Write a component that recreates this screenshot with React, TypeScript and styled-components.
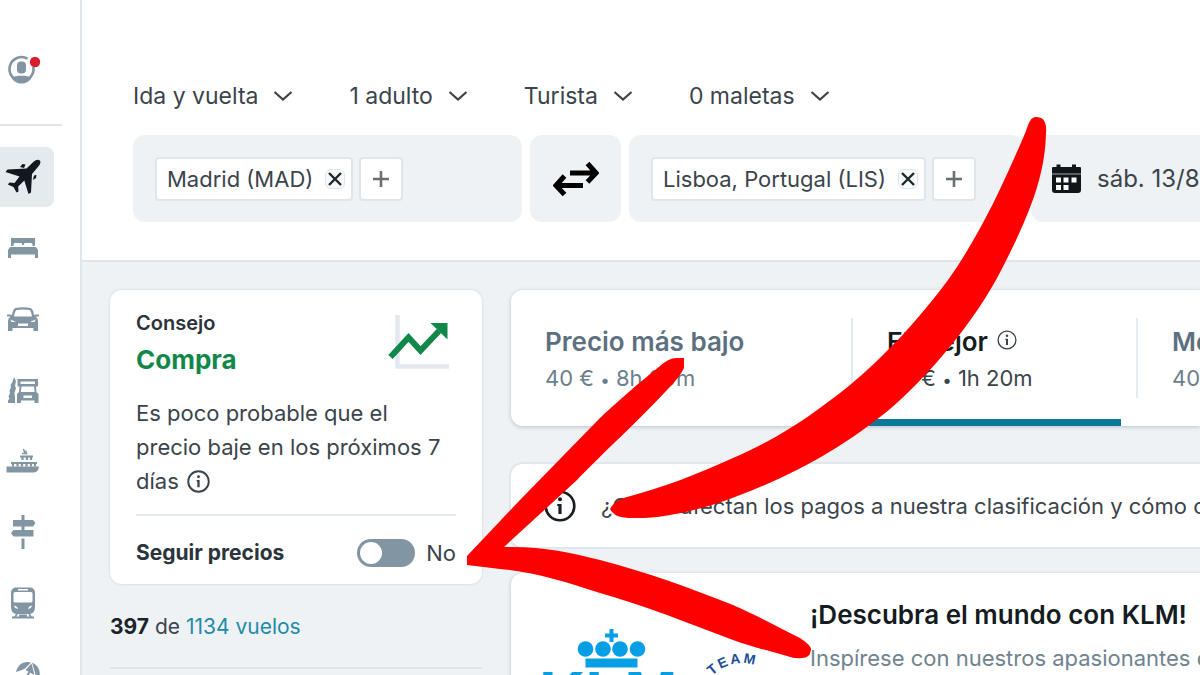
import React, { useState } from "react";
import styled, { createGlobalStyle } from "styled-components";

const GlobalStyle = createGlobalStyle`
  *, *::before, *::after { box-sizing: border-box; }
  html, body, #root { height: 100%; }
  body {
    margin: 0;
    overflow: hidden;
    background: #ffffff;
    color: #3b444b;
    font-family: Inter, "Liberation Sans", sans-serif;
    font-size: 22px;
    line-height: 34px;
  }
  button, select, input { font: inherit; color: inherit; }
  h2, h3, p, ul { margin: 0; padding: 0; }
  svg { display: block; flex: none; }
`;

const Page = styled.div`
  position: relative;
  display: flex;
  height: 100%;
  overflow: hidden;
`;

/* ---------- side navigation ---------- */

const Sidebar = styled.nav`
  flex: 0 0 82px;
  border-right: 2px solid #dfe6eb;
  background: #ffffff;
  overflow: hidden;
`;

const AccountArea = styled.div`
  width: 62px;
  padding: 51px 0 37px 6px;
  border-bottom: 2px solid #dfe5ea;
`;

const AccountButton = styled.button`
  display: block;
  padding: 0;
  border: 0;
  background: none;
  cursor: pointer;
`;

const NavList = styled.ul`
  display: flex;
  flex-direction: column;
  gap: 11px;
  padding-top: 21px;
  list-style: none;
`;

const NavLink = styled.a<{ $active?: boolean }>`
  display: flex;
  align-items: center;
  width: 54px;
  height: 60px;
  padding-left: 5px;
  border-radius: 0 8px 8px 0;
  color: ${(p) => (p.$active ? "#11181f" : "#8295a3")};
  background: ${(p) => (p.$active ? "#e5eaee" : "transparent")};
`;

/* ---------- search header ---------- */

const Main = styled.main`
  flex: 1;
  min-width: 0;
  display: flex;
  flex-direction: column;
`;

const SearchHeader = styled.header`
  flex: none;
  padding: 79px 0 38px 51px;
  border-bottom: 2px solid #dfe6eb;
  overflow: hidden;
`;

const FilterRow = styled.div`
  display: flex;
  gap: 56px;
  font-size: 23px;
`;

const FilterLabel = styled.label`
  display: flex;
  align-items: center;
  gap: 15px;
`;

const FilterSelect = styled.select`
  appearance: none;
  field-sizing: content;
  height: 34px;
  padding: 0;
  border: 0;
  background: none;
  cursor: pointer;
`;

const SearchRow = styled.div`
  display: flex;
  gap: 8px;
  margin-top: 22px;
`;

const Field = styled.div<{ $grow?: number }>`
  display: flex;
  flex: none;
  align-items: center;
  gap: 6px;
  min-width: ${(p) => (p.$grow ? `${p.$grow}px` : "auto")};
  height: 87px;
  padding: 0 22px;
  border-radius: 12px;
  background: #eef2f5;
`;

const SwapButton = styled.button`
  display: grid;
  flex: none;
  place-items: center;
  width: 91px;
  border: 0;
  border-radius: 12px;
  background: #eef2f5;
  cursor: pointer;
`;

const DateButton = styled.button`
  display: flex;
  flex: none;
  align-items: center;
  gap: 15px;
  min-width: 240px;
  padding: 0 20px;
  border: 0;
  border-radius: 12px;
  background: #eef2f5;
  font-size: 24px;
  white-space: nowrap;
  cursor: pointer;
`;

const Chip = styled.span`
  display: flex;
  align-items: center;
  gap: 12px;
  height: 44px;
  padding: 0 6px 0 10px;
  border: 2px solid #dfe6eb;
  border-radius: 4px;
  background: #ffffff;
  white-space: nowrap;
`;

const ChipRemove = styled.button`
  display: grid;
  place-items: center;
  width: 20px;
  height: 20px;
  padding: 0;
  border: 1px solid #dfe6eb;
  border-radius: 6px;
  background: #f8fafb;
  cursor: pointer;
`;

const AddButton = styled.button`
  display: grid;
  place-items: center;
  width: 44px;
  height: 44px;
  padding: 0;
  border: 2px solid #dfe6eb;
  border-radius: 4px;
  background: #ffffff;
  cursor: pointer;
`;

/* ---------- results area ---------- */

const Content = styled.div`
  display: flex;
  flex: 1;
  gap: 29px;
  min-height: 0;
  padding: 28px 0 0 28px;
  overflow: hidden;
  background: #eef2f5;
`;

const Aside = styled.aside`
  flex: 0 0 372px;
`;

const AdviceCard = styled.section`
  padding: 16px 26px 14px;
  border-radius: 12px;
  background: #ffffff;
  box-shadow: 0 0 3px rgba(60, 85, 105, 0.2);
`;

const AdviceTop = styled.div`
  display: flex;
  align-items: flex-start;
  justify-content: space-between;
  padding-right: 6px;

  svg { margin-top: 8px; }
`;

const AdviceLabel = styled.p`
  color: #2b343b;
  font-size: 20px;
  font-weight: 600;
`;

const AdviceTitle = styled.h2`
  color: #12874a;
  font-size: 26px;
  font-weight: 700;
  line-height: 40px;
`;

const AdviceText = styled.p`
  margin-top: 16px;

  svg {
    display: inline-block;
    margin-left: 2px;
    vertical-align: -4px;
  }
`;

const FollowRow = styled.div`
  display: flex;
  align-items: center;
  margin-top: 16px;
  padding-top: 20px;
  border-top: 2px solid #e5eaee;
`;

const FollowLabel = styled.label`
  flex: 1;
  color: #2b343b;
  font-size: 21px;
  font-weight: 700;
`;

const Toggle = styled.input`
  appearance: none;
  width: 58px;
  height: 28px;
  margin: 0 11px 0 0;
  padding: 3px;
  border-radius: 14px;
  background: #8295a3;
  cursor: pointer;

  &::before {
    content: "";
    display: block;
    width: 22px;
    height: 22px;
    border-radius: 50%;
    background: #ffffff;
  }

  &:checked::before {
    margin-left: auto;
  }
`;

const CountBar = styled.p`
  padding: 26px 0 23px;
  border-bottom: 2px solid #dfe5ea;
  font-size: 21px;

  strong { color: #1b2329; }
  a { color: #1f8ba8; text-decoration: none; }
`;

const Results = styled.div`
  flex: 1;
  min-width: 0;
`;

const Panel = styled.section`
  border-radius: 12px 0 0 12px;
  background: #ffffff;
  box-shadow: 0 1px 4px rgba(60, 85, 105, 0.3);
`;

const TabBar = styled(Panel)`
  display: flex;
  height: 136px;
  overflow: hidden;
`;

const Tab = styled.button<{ $active?: boolean; $width: number }>`
  position: relative;
  display: flex;
  flex: 0 0 ${(p) => p.$width}px;
  flex-direction: column;
  padding: 32px 34px 0;
  border: 0;
  background: none;
  color: ${(p) => (p.$active ? "#3b444b" : "#6b7f8d")};
  text-align: left;
  white-space: nowrap;
  cursor: pointer;

  &:not(:last-child)::before {
    content: "";
    position: absolute;
    top: 28px;
    right: 0;
    width: 2px;
    height: 80px;
    background: #e5eaf0;
  }

  &::after {
    content: "";
    position: absolute;
    right: 17px;
    bottom: 0;
    left: 16px;
    height: 7px;
    background: ${(p) => (p.$active ? "#0a7896" : "transparent")};
  }
`;

const TabTitle = styled.span<{ $active?: boolean }>`
  display: flex;
  align-items: center;
  gap: 9px;
  height: 39px;
  color: ${(p) => (p.$active ? "#141b21" : "#5c7080")};
  font-size: 26px;
  font-weight: 600;

  svg { margin-bottom: 4px; }
`;

const Dot = styled.span`
  font-size: 17px;
`;

const NoticePanel = styled(Panel)`
  display: flex;
  align-items: center;
  gap: 25px;
  height: 83px;
  margin-top: 38px;
  padding-left: 33px;
  box-shadow: 0 0 0 2px #e1e8ed;
  white-space: nowrap;
`;

const PromoPanel = styled(Panel)`
  display: flex;
  margin-top: 26px;
  min-height: 160px;
  white-space: nowrap;
`;

const PromoLogos = styled.div`
  display: flex;
  flex: 0 0 299px;
  gap: 22px;
  padding: 56px 0 0 32px;
`;

const PromoText = styled.div`
  padding-top: 22px;
  color: #71838f;
`;

const PromoTitle = styled.h3`
  margin-bottom: 6px;
  color: #141b21;
  font-size: 26px;
  font-weight: 600;
  line-height: 40px;
`;

const Annotation = styled.svg`
  position: absolute;
  top: 0;
  left: 0;
  pointer-events: none;
`;

/* ---------- icons ---------- */

const InfoIcon = ({ size = 23, color = "#3b444b", stroke = 2 }) => (
  <svg width={size} height={size} viewBox="0 0 24 24" aria-hidden="true">
    <circle cx="12" cy="12" r="10.7" fill="none" stroke={color} strokeWidth={stroke} />
    <circle cx="12" cy="7" r="1.5" fill={color} />
    <path d="M10 10.5h3.2V18h-2.4v-6H10z" fill={color} />
  </svg>
);

const ChevronIcon = () => (
  <svg width="20" height="12" viewBox="0 0 20 12" aria-hidden="true">
    <path d="M1.5 2 L10 9.5 L18.5 2" fill="none" stroke="#3b444b" strokeWidth="2.2" />
  </svg>
);

const CrossIcon = () => (
  <svg width="16" height="16" viewBox="0 0 16 16" aria-hidden="true">
    <path d="M2 2 L14 14 M14 2 L2 14" stroke="#1f272d" strokeWidth="2.4" />
  </svg>
);

const PlusIcon = () => (
  <svg width="18" height="18" viewBox="0 0 18 18" aria-hidden="true">
    <path d="M9 1 V17 M1 9 H17" stroke="#6a6f73" strokeWidth="2.6" />
  </svg>
);

const SwapIcon = () => (
  <svg width="46" height="36" viewBox="0 0 46 36" aria-hidden="true">
    <path
      d="M17 12 H42 M34.500 2.500 L43 12 L34.500 21 M30 24.500 H4 M11.500 15 L3 24.500 L11.500 33.500"
      fill="none"
      stroke="#000000"
      strokeWidth="5"
    />
  </svg>
);

const CalendarIcon = () => (
  <svg width="31" height="30" viewBox="0 0 31 30" aria-hidden="true">
    <rect x="1" y="8" width="29" height="5" fill="#5b6064" />
    <path d="M1 4 a1 1 0 0 1 1-1 h3.500 V0.500 h4 V3 h11.500 V0.500 h4 V3 H29 a1 1 0 0 1 1 1 V9 H1 Z" fill="#11161a" />
    <path d="M1 11 H30 V26 a3 3 0 0 1 -3 3 H4 a3 3 0 0 1 -3 -3 Z" fill="#11161a" />
    <path d="M5 13.500h5v5H5z M12.500 13.500h5v5h-5z M20.500 13.500h5v5h-5z M5 21h5v5H5z M12.500 21h5v5h-5z" fill="#ffffff" />
  </svg>
);

const AccountIcon = () => (
  <svg width="36" height="36" viewBox="0 0 36 36" aria-hidden="true">
    <path
      d="M21.500 7.700 A12 12 0 1 0 27.300 16"
      fill="none"
      stroke="#8295a3"
      strokeWidth="2.600"
    />
    <path d="M5.500 26.500 C10 24.300 21 24.300 25.500 26.500 C21.500 34.500 9.500 34.500 5.500 26.500 Z" fill="#8295a3" />
    <rect x="11" y="10.500" width="9" height="12" rx="4" fill="#8295a3" />
    <circle cx="29" cy="11" r="5.200" fill="#d91f2e" />
  </svg>
);

const PlaneIcon = () => (
  <svg width="36" height="36" viewBox="0 0 36 36" aria-hidden="true">
    <path
      d="M34.800 1.400 C33 0 30 1.200 27.500 3.700 L21.500 9.500 L2.500 10.500 L0.500 13 L14.500 17.500 L9.500 24 L4.500 23.500 L2.800 25.500 L8.500 28 L11.500 33.500 L13.500 32.500 L13.200 27.500 L19.300 21.500 L23.500 35 L26 33.500 L27 15 L32.500 8.500 C35 6 36.300 3 34.800 1.400 Z"
      fill="currentColor"
    />
    <path d="M15 8 l2.500-3 3 0.500 -1.500 3.500 z M28 21 l1-4.500 2.500-0.500 -0.500 3 z" fill="currentColor" />
  </svg>
);

const BedIcon = () => (
  <svg width="36" height="24" viewBox="0 0 36 24" aria-hidden="true">
    <path d="M6 2 H30 V10 H27.500 V8.500 Q27.500 7 26 7 H20 Q18.800 7 18.800 9 H17.200 Q17.200 7 16 7 H10 Q8.500 7 8.500 8.500 V10 H6 Z" fill="currentColor" />
    <path d="M5 11 H31 L33 14 V22 H30 V18.500 H6 V22 H3 V14 Z" fill="currentColor" />
  </svg>
);

const CarIcon = () => (
  <svg width="36" height="26" viewBox="0 0 36 26" aria-hidden="true">
    <path
      fillRule="evenodd"
      d="M10.500 2 Q18 0.500 25.500 2 Q28 2.500 29 9 L31 8.500 H34 V10.500 H30.500 Q33 12 33 15 V25 H28.500 V22 H7.500 V25 H3 V15 Q3 12 5.500 10.500 H2 V8.500 H5 L7 9 Q8 2.500 10.500 2 Z M11.500 4 Q10 4.500 9 10.500 H27 Q26 4.500 24.500 4 Q18 3 11.500 4 Z M5.500 13.500 L11 16 H6.500 Z M30.500 13.500 L25 16 H29.500 Z M13 17.500 V20 H23 V17.500 Z"
      fill="currentColor"
    />
  </svg>
);

const CamperIcon = () => (
  <svg width="36" height="28" viewBox="0 0 36 28" aria-hidden="true">
    <path d="M9 1 L11 5 L10 10 L11 12 L9.500 17 L10 21 V27 H3 V24.500 L4.500 22.500 L3.500 20.500 L5 17 L4.500 15 L6 11 L5.500 9 L7.500 6 Z" fill="currentColor" />
    <path
      fillRule="evenodd"
      d="M12.500 3 H33 V10.500 H31 L31.500 16 L33.500 18 V27 H29.500 V24.500 H16 V27 H12 V18 L14 16 L14.500 10.500 H12.500 Z M15.500 5.500 V8 H30 V5.500 Z M16.500 10.500 L15.800 16 H29.700 L29 10.500 Z M18.500 19.500 V22 H27 V19.500 Z"
      fill="currentColor"
    />
  </svg>
);

const ShipIcon = () => (
  <svg width="36" height="26" viewBox="0 0 36 26" aria-hidden="true">
    <path d="M1.500 18.500 H34 Q33.500 24 29 24.500 H1.500 Z" fill="currentColor" />
    <path
      d="M6 15 H32 M8 15.500 V18.500 M12.500 15.500 V18.500 M17 15.500 V18.500 M21.500 15.500 V18.500 M26 15.500 V18.500 M30 15.500 V18.500 M15 8.500 H28 M17.500 9 V12 M22 9 V12 M26 9 V12"
      stroke="currentColor"
      strokeWidth="2.200"
    />
    <path d="M17 5.500 H20 L18.500 1 M20.500 2.500 L22 6.500" stroke="currentColor" strokeWidth="1.400" fill="none" />
  </svg>
);

const SignIcon = () => (
  <svg width="36" height="36" viewBox="0 0 36 36" aria-hidden="true">
    <path
      d="M16.500 1 H19.500 V6 H28 L30.500 9 L28 12.500 H19.500 V16 H28.500 V22.500 H8.500 L6 19.200 L8.500 16 H16.500 V12.500 H8 V6 H16.500 Z M16.500 24.500 H19.500 V35 H16.500 Z"
      fill="currentColor"
    />
  </svg>
);

const TrainIcon = () => (
  <svg width="36" height="34" viewBox="0 0 36 34" aria-hidden="true">
    <path
      fillRule="evenodd"
      d="M10 1.500 H26 Q30 2.500 30 7 V21 Q30 27 25 28 H11 Q6 27 6 21 V7 Q6 2.500 10 1.500 Z M13 3 V4.500 H23 V3 Z M8.500 7.500 V15 Q8.500 16.500 10 16.500 H26 Q27.500 16.500 27.500 15 V7.500 Q27.500 6 26 6 H10 Q8.500 6 8.500 7.500 Z M9 19.500 Q9.500 22.500 13 23 Q12.500 20 9 19.500 Z M27 19.500 Q26.500 22.500 23 23 Q23.500 20 27 19.500 Z"
      fill="currentColor"
    />
    <path d="M12 28 L10 31 M24 28 L26 31 M7 31.500 H29 M14 29.500 H22" stroke="currentColor" strokeWidth="1.800" />
  </svg>
);

const UmbrellaIcon = () => (
  <svg width="38" height="30" viewBox="0 0 38 30" aria-hidden="true">
    <path
      d="M11 13 C13 5 19 1.500 26 3.500 L20 9.500 L17 11 Z M27 3.500 C33 6 36 12 34.500 19 L31 17 Z M26.500 4.500 L29.500 16 L20.500 11 Z"
      fill="currentColor"
    />
    <path d="M25 12 L15 29" stroke="currentColor" strokeWidth="2" />
  </svg>
);

const TrendIcon = () => (
  <svg width="62" height="56" viewBox="0 0 62 56" aria-hidden="true">
    <path d="M9.500 1 V52.500 H61" fill="none" stroke="#e3e8ef" strokeWidth="4.500" />
    <path d="M2.500 43 L20.500 23.500 L32.500 36.500 L51 17" fill="none" stroke="#12874a" strokeWidth="6" />
    <path d="M42.500 9 H59.500 V25.500 Z" fill="#12874a" />
  </svg>
);

const KlmLogo = () => (
  <svg width="138" height="100" viewBox="0 0 138 100" role="img" aria-label="KLM">
    <g fill="#069fe6">
      <path d="M66.500 0 h4 v4.500 h4.500 v4 h-4.500 v4.500 h-4 v-4.500 h-4.500 v-4 h4.500 z" />
      <circle cx="42.500" cy="20" r="7.800" />
      <circle cx="60" cy="20" r="7.800" />
      <circle cx="77" cy="20" r="7.800" />
      <circle cx="94.500" cy="20" r="7.800" />
      <rect x="42.500" y="29.500" width="52" height="9" />
      <text x="-4" y="88" fontFamily="Liberation Sans, sans-serif" fontWeight="700" fontSize="64">
        KLM
      </text>
    </g>
  </svg>
);

const SkyTeamLogo = () => (
  <svg width="90" height="100" viewBox="0 0 90 100" role="img" aria-label="SkyTeam">
    <path id="skyteam-arc" d="M3 56 A40 40 0 0 1 72 52" fill="none" />
    <text fontFamily="Liberation Sans, sans-serif" fontWeight="700" fontSize="14" letterSpacing="2" fill="#1c4f96">
      <textPath href="#skyteam-arc" startOffset="11">
        TEAM
      </textPath>
    </text>
  </svg>
);

/* ---------- page ---------- */

const navItems = [
  { label: "Vuelos", Icon: PlaneIcon },
  { label: "Hoteles", Icon: BedIcon },
  { label: "Coches", Icon: CarIcon },
  { label: "Autocaravanas", Icon: CamperIcon },
  { label: "Ferris", Icon: ShipIcon },
  { label: "Guías", Icon: SignIcon },
  { label: "Trenes", Icon: TrainIcon },
  { label: "Vacaciones", Icon: UmbrellaIcon },
];

const filters = [
  { name: "Tipo de viaje", value: "Ida y vuelta" },
  { name: "Viajeros", value: "1 adulto" },
  { name: "Clase", value: "Turista" },
  { name: "Equipaje", value: "0 maletas" },
];

const AirportField = ({ name, minWidth }: { name: string; minWidth: number }) => (
  <Field $grow={minWidth}>
    <Chip>
      {name}
      <ChipRemove aria-label={`Quitar ${name}`}>
        <CrossIcon />
      </ChipRemove>
    </Chip>
    <AddButton aria-label="Añadir aeropuerto">
      <PlusIcon />
    </AddButton>
  </Field>
);

const Fare = ({ price, time }: { price: string; time: string }) => (
  <span>
    {price} <Dot>•</Dot> {time}
  </span>
);

export default function App() {
  const [following, setFollowing] = useState(false);

  return (
    <>
      <GlobalStyle />
      <Page>
        <Sidebar>
          <AccountArea>
            <AccountButton aria-label="Mi cuenta">
              <AccountIcon />
            </AccountButton>
          </AccountArea>
          <NavList>
            {navItems.map(({ label, Icon }, i) => (
              <li key={label}>
                <NavLink href="#" aria-label={label} $active={i === 0}>
                  <Icon />
                </NavLink>
              </li>
            ))}
          </NavList>
        </Sidebar>

        <Main>
          <SearchHeader>
            <FilterRow>
              {filters.map((f) => (
                <FilterLabel key={f.name}>
                  <FilterSelect aria-label={f.name}>
                    <option>{f.value}</option>
                  </FilterSelect>
                  <ChevronIcon />
                </FilterLabel>
              ))}
            </FilterRow>
            <SearchRow>
              <AirportField name="Madrid (MAD)" minWidth={389} />
              <SwapButton aria-label="Intercambiar origen y destino">
                <SwapIcon />
              </SwapButton>
              <AirportField name="Lisboa, Portugal (LIS)" minWidth={394} />
              <DateButton>
                <CalendarIcon />
                sáb. 13/8
              </DateButton>
            </SearchRow>
          </SearchHeader>

          <Content>
            <Aside>
              <AdviceCard>
                <AdviceTop>
                  <div>
                    <AdviceLabel>Consejo</AdviceLabel>
                    <AdviceTitle>Compra</AdviceTitle>
                  </div>
                  <TrendIcon />
                </AdviceTop>
                <AdviceText>
                  Es poco probable que el precio baje en los próximos 7 días <InfoIcon />
                </AdviceText>
                <FollowRow>
                  <FollowLabel htmlFor="follow-prices">Seguir precios</FollowLabel>
                  <Toggle
                    id="follow-prices"
                    type="checkbox"
                    role="switch"
                    checked={following}
                    onChange={(e) => setFollowing(e.target.checked)}
                  />
                  <span>{following ? "Sí" : "No"}</span>
                </FollowRow>
              </AdviceCard>
              <CountBar>
                <strong>397</strong> de <a href="#">1134 vuelos</a>
              </CountBar>
            </Aside>

            <Results>
              <TabBar>
                <Tab $width={342}>
                  <TabTitle>Precio más bajo</TabTitle>
                  <Fare price="40 €" time="8h 20m" />
                </Tab>
                <Tab $width={285} $active>
                  <TabTitle $active>
                    El mejor <InfoIcon size={20} stroke={1.6} />
                  </TabTitle>
                  <Fare price="40 €" time="1h 20m" />
                </Tab>
                <Tab $width={285}>
                  <TabTitle>Mejor precio</TabTitle>
                  <Fare price="40 €" time="1h 20m" />
                </Tab>
              </TabBar>
              <NoticePanel>
                <InfoIcon size={32} color="#171e24" />
                <p>¿Cómo afectan los pagos a nuestra clasificación y cómo clasificamos?</p>
              </NoticePanel>
              <PromoPanel>
                <PromoLogos>
                  <KlmLogo />
                  <SkyTeamLogo />
                </PromoLogos>
                <PromoText>
                  <PromoTitle>¡Descubra el mundo con KLM!</PromoTitle>
                  <p>Inspírese con nuestros apasionantes destinos</p>
                </PromoText>
              </PromoPanel>
            </Results>
          </Content>
        </Main>

        <Annotation width="1200" height="675" viewBox="0 0 1200 675" aria-hidden="true">
          <g fill="#ff0000">
            <path d="M1036 117 C1043 117 1047 121 1046 133 C1045 175 1031 214 996 280 C968 330 925 379 890 409 C845 446 800 472 740 495 C700 511 660 519 633 518 C620 518 614 516 610 509 C614 502 620 499 627 497 C665 487 700 473 733 458 C780 438 815 413 850 385 C885 356 920 318 948 280 C980 235 1003 185 1026 131 C1029 122 1031 117 1036 117 Z" />
            <path d="M467 556 L520 500 L600 418 C625 395 640 382 660 366 Q669 358 676 358 H684 V368 Q680 377 667 390 C640 419 600 456 577 480 L504 547 C540 546 570 552 600 560 C650 573 690 588 733 605 C760 617 780 628 800 638 Q812 646 811 650 Q810 658 802 658 Q795 659 787 656 C765 650 750 646 733 640 L667 615 C640 605 620 599 600 593 C565 582 535 572 500 569 L467 565 Z" />
          </g>
        </Annotation>
      </Page>
    </>
  );
}
